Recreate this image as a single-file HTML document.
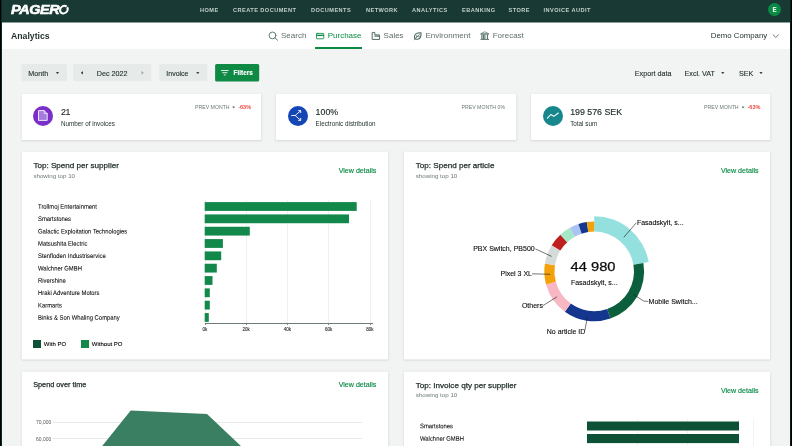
<!DOCTYPE html>
<html>
<head>
<meta charset="utf-8">
<title>Analytics</title>
<style>
*{box-sizing:border-box;margin:0;padding:0}
html,body{width:792px;height:446px;overflow:hidden;background:#f2f4f3;font-family:"Liberation Sans",sans-serif;color:#1d2b27}
.abs{position:absolute}
#app{position:absolute;left:0;top:0;width:792px;height:446px;overflow:hidden;background:#f2f4f3;will-change:transform}
.edgeL{left:0;top:0;width:2px;height:446px;background:linear-gradient(90deg,#000 0,#000 1px,#072b2a 1px,#072b2a 2px);z-index:50}
.edgeR{left:790px;top:0;width:2px;height:446px;background:linear-gradient(90deg,#061f1f 0,#061f1f 1px,#000 1px,#000 2px);z-index:50}
#nav{left:0;top:0;width:792px;height:22.5px;background:#193a34}
#logo{left:11.4px;top:2.1px;font-weight:bold;font-style:italic;font-size:13.4px;line-height:16px;color:#fff;letter-spacing:-0.35px;white-space:nowrap;-webkit-text-stroke:0.6px #fff;transform:scaleX(1.075);transform-origin:0 0}
.nv{top:6.5px;font-size:5.6px;line-height:7px;font-weight:bold;letter-spacing:0.46px;color:#c3d0cb;white-space:nowrap}
#avatar{left:768px;top:3.4px;width:13px;height:13px;border-radius:50%;background:#0a8a45;color:#fff;font-size:6.3px;font-weight:bold;text-align:center;line-height:13px}
#sub{left:0;top:22.5px;width:792px;height:26.4px;background:#fff}
#title{left:11px;top:31px;font-size:8.7px;line-height:10px;font-weight:bold;color:#24332f;white-space:nowrap}
.tab{top:31.4px;font-size:8px;line-height:10px;color:#5f6e69;white-space:nowrap}
.tab.on{color:#0a8a45}
#uline{left:314.5px;top:47.4px;width:47.5px;height:1.5px;background:#0a8a45}
.btn{top:64px;height:17.5px;background:#e6eae8;border-radius:1.5px}
.bt{-webkit-text-stroke:0.12px currentColor;font-size:7.2px;line-height:8px;color:#24332f;white-space:nowrap;position:absolute;top:70px}
.t{white-space:nowrap;position:absolute}
.card{position:absolute;background:#fff;border-radius:1px;box-shadow:0 0.5px 1.2px rgba(0,0,0,0.13)}
.kpiv{font-size:8.8px;line-height:11px;color:#1d2b27;-webkit-text-stroke:0.15px #1d2b27;letter-spacing:0}
.kpil{font-size:6.3px;line-height:8px;color:#24332f}
.prev{font-size:5.2px;line-height:6px;color:#6b7a75}
.neg{font-size:5.5px;line-height:6px;color:#ef4a3f;font-weight:bold}
.ct{font-size:8.1px;line-height:10px;color:#1d2b27;-webkit-text-stroke:0.25px #1d2b27}
.ct2{font-size:7.3px;line-height:10px;color:#1d2b27;-webkit-text-stroke:0.25px #1d2b27}
.cs{font-size:6.2px;line-height:7px;color:#6b7a75}
.vd{font-size:7.1px;line-height:9px;color:#0a8a45;-webkit-text-stroke:0.15px #0a8a45}
.lbl{font-size:6.6px;line-height:8px;color:#000;-webkit-text-stroke:0.05px #000;transform:scaleX(0.893) rotate(0.03deg);transform-origin:0 50%}
.tick{font-size:4.5px;line-height:6px;color:#2a2a2a;-webkit-text-stroke:0.1px #2a2a2a}
.dl{font-size:7px;line-height:8px;color:#0a0a0a;-webkit-text-stroke:0.1px #0a0a0a}
.leg{font-size:6px;line-height:8px;color:#000;-webkit-text-stroke:0.1px #000}
.caret{position:absolute;width:3.6px;height:2.4px;background:#3b4a45;clip-path:polygon(0 0,100% 0,50% 100%)}
.caret.s{width:3px;height:2.2px;background:#5f6e69}
svg{position:absolute;left:0;top:0;overflow:visible}
</style>
</head>
<body>
<div id="app">
<div class="abs edgeL"></div><div class="abs edgeR"></div>

<!-- backgrounds -->
<svg width="792" height="446" viewBox="0 0 792 446" style="z-index:0">
<defs><filter id="sh" x="-5%" y="-5%" width="110%" height="115%"><feGaussianBlur stdDeviation="0.85"/></filter></defs>
<rect x="0" y="0" width="792" height="22.7" fill="#193a34"/>
<rect x="0" y="22.7" width="792" height="26.15" fill="#fff"/>
<g fill="#e6eae8">
<rect x="21.5" y="64" width="45.4" height="17.3" rx="1.5"/>
<rect x="73.1" y="64" width="78.1" height="17.3" rx="1.5"/>
<rect x="159.2" y="64" width="48.2" height="17.3" rx="1.5"/>
</g>
<rect x="215.1" y="63.9" width="44.1" height="17.6" rx="1.5" fill="#0f8a45"/>
<g fill="#000" fill-opacity="0.16" filter="url(#sh)" transform="translate(0.1 -0.1)">
<rect x="21.8" y="94.6" width="239.4" height="46.15"/>
<rect x="276" y="94.6" width="240.2" height="46.15"/>
<rect x="531" y="94.6" width="239.2" height="46.15"/>
<rect x="21.8" y="152.65" width="366.3" height="207.55"/>
<rect x="403.9" y="152.65" width="366.2" height="207.55"/>
<rect x="21.8" y="372.45" width="366.3" height="90"/>
<rect x="403.9" y="372.45" width="366.2" height="90"/>
</g>
<g fill="#fff">
<rect x="21.8" y="93.8" width="239.4" height="46.15" rx="1"/>
<rect x="276" y="93.8" width="240.2" height="46.15" rx="1"/>
<rect x="531" y="93.8" width="239.2" height="46.15" rx="1"/>
<rect x="21.8" y="151.85" width="366.3" height="207.55" rx="1"/>
<rect x="403.9" y="151.85" width="366.2" height="207.55" rx="1"/>
<rect x="21.8" y="371.65" width="366.3" height="90" rx="1"/>
<rect x="403.9" y="371.65" width="366.2" height="90" rx="1"/>
</g>
</svg>

<!-- top nav -->
<div class="abs" id="logo">PAGER</div>
<svg width="100" height="22" viewBox="0 0 100 22" fill="none"><g transform="translate(63.9 9.65) skewX(-8)"><circle r="3.8" stroke="#fff" stroke-width="2.1" stroke-dasharray="22.4 1.48" transform="rotate(-40)"/></g></svg>
<div class="abs nv" style="left:200px">HOME</div>
<div class="abs nv" style="left:233px">CREATE DOCUMENT</div>
<div class="abs nv" style="left:311px">DOCUMENTS</div>
<div class="abs nv" style="left:366px">NETWORK</div>
<div class="abs nv" style="left:412px">ANALYTICS</div>
<div class="abs nv" style="left:462px">EBANKING</div>
<div class="abs nv" style="left:508.5px">STORE</div>
<div class="abs nv" style="left:543.5px">INVOICE AUDIT</div>
<div class="abs" id="avatar">E</div>

<!-- sub header -->
<div class="abs" id="title">Analytics</div>
<div class="abs tab" style="left:281px">Search</div>
<div class="abs tab on" style="left:327.7px">Purchase</div>
<div class="abs tab" style="left:383.6px">Sales</div>
<div class="abs tab" style="left:425.5px">Environment</div>
<div class="abs tab" style="left:492.7px">Forecast</div>
<div class="abs" id="uline"></div>
<div class="abs tab" style="left:710.8px;color:#24332f;font-size:7.8px">Demo Company</div>
<svg width="792" height="60" viewBox="0 0 792 60" fill="none" stroke-linecap="round" stroke-linejoin="round">
  <!-- search -->
  <circle cx="272.5" cy="35.4" r="3.4" stroke="#4a655e" stroke-width="0.85"/>
  <path d="M275 38L277.6 40.2" stroke="#4a655e" stroke-width="0.85"/>
  <!-- purchase card -->
  <rect x="316.5" y="33.4" width="7.3" height="5.4" rx="0.6" stroke="#0a8a45" stroke-width="0.85"/>
  <path d="M316.5 35.3H323.8" stroke="#0a8a45" stroke-width="1.3" stroke-linecap="butt"/>
  <!-- sales -->
  <path d="M372.55 32.45H374.75V34.9H379.45V39.45H372.55Z" stroke="#4a655e" stroke-width="0.95" stroke-linejoin="miter"/>
  <path d="M374.4 36.3H379.4" stroke="#4a655e" stroke-width="0.8" stroke-linecap="butt"/>
  <path d="M374.8 35.6H379.2" stroke="#4a655e" stroke-width="0.7" stroke-opacity="0.55" stroke-linecap="butt"/>
  <!-- environment -->
  <path d="M421 32.7C417 32.5 414.2 34 414.4 37.1C414.5 38.7 415.7 39.5 417.2 39.3C420 38.9 421.3 36.4 421 32.7Z" stroke="#4a655e" stroke-width="1.05"/>
  <path d="M414.1 39.6L419.6 34.2" stroke="#4a655e" stroke-width="0.9"/>
  <path d="M416.3 35.2L416.4 37.3M417.3 36.5H419.4" stroke="#4a655e" stroke-width="0.6"/>
  <!-- forecast -->
  <path d="M481 33.6L484.7 31.8L488.4 33.6" stroke="#4a655e" stroke-width="0.7"/>
  <path d="M480.6 34H488.9" stroke="#4a655e" stroke-width="1.1" stroke-linecap="butt"/>
  <path d="M480.5 39.4H489" stroke="#4a655e" stroke-width="0.9" stroke-linecap="butt"/>
  <path d="M481.9 34.5V39M483.4 34.5V39M484.9 34.5V39M487.4 34.5V39" stroke="#4a655e" stroke-width="1" stroke-linecap="butt"/>
  <!-- chevron -->
  <path d="M773.2 34.9L775.8 37.4L778.4 34.9" stroke="#3b4a45" stroke-width="0.75"/>
</svg>

<!-- filter row -->
<div class="bt" style="left:28.3px">Month</div>
<div class="caret" style="left:55.7px;top:71.8px"></div>
<div class="bt" style="left:96.7px">Dec 2022</div>
<div class="abs" style="left:80.5px;top:70.9px;width:2.8px;height:3.9px;background:#3b4a45;clip-path:polygon(100% 0,100% 100%,0 50%)"></div>
<div class="abs" style="left:141.3px;top:70.9px;width:2.8px;height:3.9px;background:#aab5b1;clip-path:polygon(0 0,0 100%,100% 50%)"></div>
<div class="bt" style="left:166.3px;font-size:7px">Invoice</div>
<div class="caret" style="left:196px;top:71.8px"></div>
<div class="bt" style="left:233.6px;color:#fff;font-weight:bold;font-size:6.4px;top:69px">Filters</div>
<svg width="792" height="100" viewBox="0 0 792 100" fill="none">
  <path d="M221 70.5H228.6M222.2 72.7H227.4M223.8 74.9H225.8" stroke="#fff" stroke-width="0.85"/>
</svg>
<div class="bt" style="left:634.8px;top:70px">Export data</div>
<div class="bt" style="left:684.5px;top:70px">Excl. VAT</div>
<div class="caret" style="left:721px;top:71.8px"></div>
<div class="bt" style="left:739px;top:70px">SEK</div>
<div class="caret" style="left:759.2px;top:71.8px"></div>

<!-- KPI cards -->
<div class="abs" style="left:33px;top:105.5px;width:20px;height:20px;border-radius:50%;background:#7b2fc9"></div>
<div class="abs" style="left:287.5px;top:105.5px;width:20px;height:20px;border-radius:50%;background:#1546b5"></div>
<div class="abs" style="left:542.5px;top:105.5px;width:20px;height:20px;border-radius:50%;background:#17878c"></div>
<svg width="792" height="150" viewBox="0 0 792 150" fill="none" stroke-linecap="round" stroke-linejoin="round">
  <!-- doc icon -->
  <path d="M38.9 110.6H44.2L47.2 113.6V120.4H38.9Z" fill="#a57be0" stroke="#f4ecff" stroke-width="0.95"/>
  <path d="M44.2 110.6V113.6H47.2" stroke="#f4ecff" stroke-width="0.8"/>
  <!-- share/split icon -->
  <path d="M291.6 115.5H295.2L300.4 110.9M295.2 115.5L300.4 120.1" stroke="#fff" stroke-width="0.9"/>
  <path d="M298.6 110.6H300.7V112.7M298.6 120.4H300.7V118.3" stroke="#fff" stroke-width="0.9"/>
  <!-- trend icon -->
  <path d="M547.4 118.2L550.8 114.5L553.9 116.3L558.3 113" stroke="#fff" stroke-width="1.05"/>
</svg>
<div class="t kpiv" style="left:61px;top:106.8px;letter-spacing:-0.5px">21</div>
<div class="t kpil" style="left:61px;top:119.6px">Number of invoices</div>
<div class="t kpiv" style="left:315.6px;top:106.8px">100%</div>
<div class="t kpil" style="left:315.6px;top:119.6px">Electronic distribution</div>
<div class="t kpiv" style="left:570.2px;top:106.8px">199 576 SEK</div>
<div class="t kpil" style="left:570.2px;top:119.6px">Total sum</div>
<div class="t prev" style="left:195px;top:104.3px">PREV MONTH</div>
<div class="caret s" style="left:232.2px;top:106.4px"></div>
<div class="t neg" style="left:238.2px;top:104.3px">-63%</div>
<div class="t prev" style="left:461.5px;top:104.3px">PREV MONTH 0%</div>
<div class="t prev" style="left:704px;top:104.3px">PREV MONTH</div>
<div class="caret s" style="left:741.5px;top:106.4px"></div>
<div class="t neg" style="left:747.5px;top:104.3px">-63%</div>

<!-- chart cards -->

<!-- card 1: supplier -->
<div class="t ct" style="left:33.4px;top:160.6px">Top: Spend per supplier</div>
<div class="t cs" style="left:33.4px;top:171.8px">showing top 10</div>
<div class="t vd" style="left:338.7px;top:167px">View details</div>
<div class="abs" style="left:204.55px;top:200px;width:0.5px;height:123px;background:#eef0ef"></div>
<div class="abs" style="left:204.50px;top:323px;width:0.5px;height:2.2px;background:#7a8883"></div>
<div class="t tick" style="left:194.80px;top:326.6px;width:20px;text-align:center">0k</div>
<div class="abs" style="left:245.83px;top:200px;width:0.5px;height:123px;background:#eef0ef"></div>
<div class="abs" style="left:245.78px;top:323px;width:0.5px;height:2.2px;background:#7a8883"></div>
<div class="t tick" style="left:236.08px;top:326.6px;width:20px;text-align:center">20k</div>
<div class="abs" style="left:287.11px;top:200px;width:0.5px;height:123px;background:#eef0ef"></div>
<div class="abs" style="left:287.06px;top:323px;width:0.5px;height:2.2px;background:#7a8883"></div>
<div class="t tick" style="left:277.36px;top:326.6px;width:20px;text-align:center">40k</div>
<div class="abs" style="left:328.39px;top:200px;width:0.5px;height:123px;background:#eef0ef"></div>
<div class="abs" style="left:328.34px;top:323px;width:0.5px;height:2.2px;background:#7a8883"></div>
<div class="t tick" style="left:318.64px;top:326.6px;width:20px;text-align:center">60k</div>
<div class="abs" style="left:369.67px;top:200px;width:0.5px;height:123px;background:#eef0ef"></div>
<div class="abs" style="left:369.62px;top:323px;width:0.5px;height:2.2px;background:#7a8883"></div>
<div class="t tick" style="left:359.92px;top:326.6px;width:20px;text-align:center">80k</div>
<div class="abs" style="left:204.5px;top:322.6px;width:168px;height:0.6px;background:#6f7d78"></div>
<div class="t lbl" style="left:37.6px;top:202px;transform:translateY(0.75px) scaleX(0.893) rotate(0.03deg)">Trollmoj Entertainment</div>
<div class="t lbl" style="left:37.6px;top:215px;transform:translateY(0.08px) scaleX(0.893) rotate(0.03deg)">Smartstones</div>
<div class="t lbl" style="left:37.6px;top:227px;transform:translateY(0.41px) scaleX(0.893) rotate(0.03deg)">Galactic Exploitation Technologies</div>
<div class="t lbl" style="left:37.6px;top:239px;transform:translateY(0.74px) scaleX(0.893) rotate(0.03deg)">Matsushita Electric</div>
<div class="t lbl" style="left:37.6px;top:252px;transform:translateY(0.07px) scaleX(0.893) rotate(0.03deg)">Stenfloden Industriservice</div>
<div class="t lbl" style="left:37.6px;top:264px;transform:translateY(0.40px) scaleX(0.893) rotate(0.03deg)">Walchner GMBH</div>
<div class="t lbl" style="left:37.6px;top:276px;transform:translateY(0.73px) scaleX(0.893) rotate(0.03deg)">Rivershine</div>
<div class="t lbl" style="left:37.6px;top:289px;transform:translateY(0.06px) scaleX(0.893) rotate(0.03deg)">Hraki Adventure Motors</div>
<div class="t lbl" style="left:37.6px;top:301px;transform:translateY(0.39px) scaleX(0.893) rotate(0.03deg)">Karmarts</div>
<div class="t lbl" style="left:37.6px;top:313px;transform:translateY(0.72px) scaleX(0.893) rotate(0.03deg)">Binks & Son Whaling Company</div>
<svg width="792" height="446" viewBox="0 0 792 446"><rect x="204.7" y="202.10" width="152.0" height="8.8" fill="#12884a"/><rect x="204.7" y="214.43" width="144.3" height="8.8" fill="#12884a"/><rect x="204.7" y="226.76" width="45.1" height="8.8" fill="#12884a"/><rect x="204.7" y="239.09" width="18.2" height="8.8" fill="#12884a"/><rect x="204.7" y="251.42" width="16.5" height="8.8" fill="#12884a"/><rect x="204.7" y="263.75" width="12.1" height="8.8" fill="#12884a"/><rect x="204.7" y="276.08" width="7.8" height="8.8" fill="#12884a"/><rect x="204.7" y="288.41" width="5.1" height="8.8" fill="#12884a"/><rect x="204.7" y="300.74" width="5.1" height="8.8" fill="#12884a"/><rect x="204.7" y="313.07" width="4.1" height="8.8" fill="#12884a"/></svg>
<div class="abs" style="left:33.2px;top:340.2px;width:7.8px;height:7.8px;background:#0d5237"></div>
<div class="t leg" style="left:43.8px;top:340.3px">With PO</div>
<div class="abs" style="left:81.2px;top:340.2px;width:7.8px;height:7.8px;background:#12884a"></div>
<div class="t leg" style="left:91.8px;top:340.3px">Without PO</div>

<!-- card 2: article donut -->
<div class="t ct" style="left:415.7px;top:160.6px">Top: Spend per article</div>
<div class="t cs" style="left:415.7px;top:171.8px">showing top 10</div>
<div class="t vd" style="left:720.9px;top:167px">View details</div>
<svg width="792" height="446" viewBox="0 0 792 446" fill="none">
<path d="M594.20 216.20A55.2 55.2 0 0 1 648.61 262.10L633.43 264.69A39.8 39.8 0 0 0 594.20 231.60Z" fill="#93e0de"/>
<path d="M643.39 262.99A49.9 49.9 0 0 1 610.45 318.58L607.16 309.03A39.8 39.8 0 0 0 633.43 264.69Z" fill="#0c5f3c"/>
<path d="M610.45 318.58A49.9 49.9 0 0 1 564.87 311.77L570.81 303.60A39.8 39.8 0 0 0 607.16 309.03Z" fill="#15368e"/>
<path d="M564.87 311.77A49.9 49.9 0 0 1 546.05 284.48L555.79 281.84A39.8 39.8 0 0 0 570.81 303.60Z" fill="#f8b8c3"/>
<path d="M546.05 284.48A49.9 49.9 0 0 1 544.91 263.59L554.89 265.17A39.8 39.8 0 0 0 555.79 281.84Z" fill="#f4a20c"/>
<path d="M544.91 263.59A49.9 49.9 0 0 1 551.74 245.18L560.34 250.49A39.8 39.8 0 0 0 554.89 265.17Z" fill="#d5dbd9"/>
<path d="M551.74 245.18A49.9 49.9 0 0 1 560.36 234.73L567.21 242.15A39.8 39.8 0 0 0 560.34 250.49Z" fill="#c01f1f"/>
<path d="M560.36 234.73A49.9 49.9 0 0 1 569.86 227.84L574.78 236.66A39.8 39.8 0 0 0 567.21 242.15Z" fill="#a5e8c6"/>
<path d="M569.86 227.84A49.9 49.9 0 0 1 578.45 224.05L581.64 233.63A39.8 39.8 0 0 0 574.78 236.66Z" fill="#a9c3f2"/>
<path d="M578.45 224.05A49.9 49.9 0 0 1 586.82 222.05L588.32 232.04A39.8 39.8 0 0 0 581.64 233.63Z" fill="#15368e"/>
<path d="M586.82 222.05A49.9 49.9 0 0 1 594.20 221.50L594.20 231.60A39.8 39.8 0 0 0 588.32 232.04Z" fill="#f4a20c"/>
<g stroke="#1a1a1a" stroke-width="0.6" fill="none">
<path d="M623.8 237.3L636.3 222.8"/>
<path d="M633.3 294.5L643.9 301.1L648.3 301.4"/>
<path d="M587.4 317L584.9 330.5"/>
<path d="M557 296.8L542.9 305.6"/>
<path d="M550.2 274.3L532 273.8"/>
<path d="M551.6 256.4L535.4 248.9"/>
</g>
</svg>
<div class="t" style="left:542.6px;top:260.4px;width:100px;text-align:center;font-size:12.8px;line-height:14px;color:#0a0a0a;-webkit-text-stroke:0.25px #0a0a0a;transform:scaleX(1.15)">44 980</div>
<div class="t dl" style="left:544.3px;top:279.4px;width:100px;text-align:center">Fasadskylt, s...</div>
<div class="t dl" style="left:636.9px;top:218.8px">Fasadskylt, s...</div>
<div class="t dl" style="left:648.6px;top:298.4px">Mobile Switch...</div>
<div class="t dl" style="left:546.8px;top:328.1px">No article ID</div>
<div class="t dl" style="left:521.9px;top:302.1px">Others</div>
<div class="t dl" style="left:500.5px;top:269.8px">Pixel 3 XL</div>
<div class="t dl" style="left:473.2px;top:244.9px">PBX Switch, PB500</div>

<!-- card 3: spend over time -->
<div class="t ct2" style="left:33.2px;top:380px">Spend over time</div>
<div class="t vd" style="left:338.7px;top:381.2px">View details</div>
<div class="abs" style="left:52.9px;top:421.7px;width:309px;height:0.6px;background:#e6eae8"></div>
<div class="abs" style="left:52.9px;top:437.9px;width:309px;height:0.6px;background:#e6eae8"></div>
<div class="t" style="left:36px;top:419.3px;font-size:5px;line-height:6px;color:#555">70,000</div>
<div class="t" style="left:36px;top:435.5px;font-size:5px;line-height:6px;color:#555">60,000</div>
<svg width="792" height="446" viewBox="0 0 792 446">
<path d="M101 447.5L130.7 410.4L207 414L242.5 447.5Z" fill="#3b7f63"/>
</svg>

<!-- card 4: invoice qty -->
<div class="t ct" style="left:415.7px;top:380.6px">Top: Invoice qty per supplier</div>
<div class="t cs" style="left:415.7px;top:391.4px">showing top 10</div>
<div class="t vd" style="left:720.9px;top:387px">View details</div>
<div class="abs" style="left:636.8px;top:419px;width:0.5px;height:30px;background:#f1f3f2"></div>
<div class="abs" style="left:687.4px;top:419px;width:0.5px;height:30px;background:#f1f3f2"></div>
<div class="abs" style="left:738.4px;top:419px;width:0.5px;height:30px;background:#f1f3f2"></div>
<div class="abs" style="left:753.2px;top:419px;width:0.5px;height:30px;background:#f1f3f2"></div>
<svg width="792" height="446" viewBox="0 0 792 446"><rect x="587" y="421.5" width="152" height="9" fill="#0d5237"/><rect x="587" y="434" width="152" height="9.1" fill="#0d5237"/></svg>
<div class="t lbl" style="left:419.7px;top:422px;transform:translateY(0.35px) scaleX(0.893) rotate(0.03deg)">Smartstones</div>
<div class="t lbl" style="left:419.7px;top:434px;transform:translateY(0.75px) scaleX(0.893) rotate(0.03deg)">Walchner GMBH</div>

</div>
</body>
</html>
